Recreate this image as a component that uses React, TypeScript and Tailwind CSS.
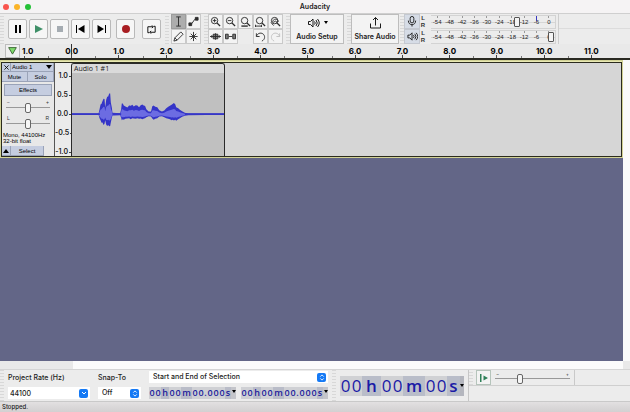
import type { ReactNode } from 'react';
import { clsx } from 'clsx';

const SANS = "font-['Inter','Liberation_Sans',sans-serif]";

const METER_LABELS = ['-54', '-48', '-42', '-36', '-30', '-24', '-18', '-12', '-6', '0'];
const RULER_LABELS = ['0.0', '1.0', '2.0', '3.0', '4.0', '5.0', '6.0', '7.0', '8.0', '9.0', '10.0', '11.0'];
const AMPLITUDES = ['1.0', '0.5', '0.0', '-0.5', '-1.0'];

// x, top, bottom of the waveform envelope
const PEAKS = [
  [36, 173, 177], [116, 173, 177], [119, 160, 187], [122, 146, 193], [125, 144, 201], [128, 136, 200],
  [131, 129, 207], [134, 130, 204], [136, 155, 193], [139, 132, 206], [142, 123, 210], [145, 122, 207],
  [148, 113, 211], [151, 113, 210], [153, 140, 200], [156, 155, 186], [158, 171, 179], [181, 172, 178],
  [184, 160, 186], [186, 143, 193], [189, 143, 190], [192, 149, 192], [197, 152, 189], [203, 155, 188],
  [208, 149, 187], [213, 150, 190], [218, 147, 187], [222, 152, 188], [228, 148, 189], [233, 149, 187],
  [238, 154, 189], [243, 148, 188], [248, 146, 190], [253, 150, 188], [256, 150, 187], [260, 160, 184],
  [267, 167, 181], [274, 167, 182], [278, 151, 188], [282, 149, 192], [287, 153, 189], [293, 154, 187],
  [299, 163, 182], [307, 167, 181], [314, 164, 184], [320, 157, 187], [326, 153, 189], [331, 150, 190],
  [336, 147, 193], [340, 144, 192], [343, 142, 194], [347, 145, 192], [350, 154, 195], [356, 157, 190],
  [361, 162, 187], [368, 166, 183], [376, 171, 180], [386, 173, 178], [494, 173, 177],
];

function envelope(scale: number) {
  const y = (v: number) => 177 + (v - 177) * scale;
  const top = PEAKS.map(([x, t]) => `${x},${y(t)}`);
  const bottom = [...PEAKS].reverse().map(([x, , b]) => `${x},${y(b)}`);
  return [...top, ...bottom].join(' ');
}

function Icon({ children, className = 'size-[11px]' }: { children: ReactNode; className?: string }) {
  return (
    <svg
      viewBox="0 0 24 24"
      className={className}
      fill="none"
      stroke="currentColor"
      strokeWidth="2"
      aria-hidden="true"
    >
      {children}
    </svg>
  );
}

const lens = (
  <>
    <circle cx="10" cy="10" r="7" />
    <path d="M15 15l7 7" strokeWidth="3" />
  </>
);

const speaker = <path d="M2 9h4l5-5v16l-5-5H2zM14 9q3 3 0 6M17 6q5 6 0 12M20 4q7 8 0 16" />;

function Grip() {
  return <div className="w-1 shrink-0 self-stretch bg-[repeating-linear-gradient(0deg,#d8d8d8_0_1px,#ececec_1px_3px)]" />;
}

function TransportButton({ label, children }: { label: string; children: ReactNode }) {
  return (
    <button
      aria-label={label}
      className="flex h-5 w-[19px] items-center justify-center rounded-xs border border-[#b9b9b9] bg-[#f6f6f6] text-black"
    >
      {children}
    </button>
  );
}

function ToolButton({ label, active, dim, children }: { label: string; active?: boolean; dim?: boolean; children: ReactNode }) {
  return (
    <button
      aria-label={label}
      className={clsx(
        'flex size-[15px] items-center justify-center border',
        active ? 'border-[#9c9c9c] bg-[#adadad]' : 'border-[#c9c9c9] bg-[#f3f3f3]',
        dim ? 'text-[#c0c0c0]' : 'text-[#2c2c2c]',
      )}
    >
      {children}
    </button>
  );
}

function Meter({ label, value, peak, children }: { label: string; value: number; peak?: boolean; children: ReactNode }) {
  return (
    <div className="flex h-[15px] items-center">
      <button aria-label={label} className="flex h-[15px] w-4 items-center justify-center border border-[#c4c8d0] bg-[#d6dce6]">
        {children}
      </button>
      <div className="flex w-[6px] flex-col items-center font-['Liberation_Sans',sans-serif] text-[6px] leading-[7px] font-bold text-[#333]">
        <span>L</span>
        <span>R</span>
      </div>
      <div className="relative ml-[5px] flex h-[14px] w-[125px] border-y border-r border-[#d3d3d3]">
        <div className="absolute inset-x-0 top-[6px] h-px bg-[#d6d6d6]" />
        {METER_LABELS.map((l) => (
          <span key={l} className="relative flex flex-1 justify-center font-['Liberation_Sans',sans-serif] text-[6px] leading-[13px] text-[#222]">
            {l}
            <span className={clsx('absolute top-0 w-px', peak && l === '-6' ? 'h-[5px] bg-[#3a3ac0]' : 'h-[2px] bg-[#999]')} />
          </span>
        ))}
        <input
          type="range"
          aria-label={`${label} level`}
          defaultValue={value}
          className="absolute inset-0 w-full appearance-none bg-transparent [&::-webkit-slider-thumb]:h-[10px] [&::-webkit-slider-thumb]:w-[6px] [&::-webkit-slider-thumb]:appearance-none [&::-webkit-slider-thumb]:rounded-[1px] [&::-webkit-slider-thumb]:border [&::-webkit-slider-thumb]:border-[#555] [&::-webkit-slider-thumb]:bg-[#f4f4f4]"
        />
      </div>
    </div>
  );
}

function Slider({ label, value, low, high }: { label: string; value: number; low: string; high: string }) {
  return (
    <div className="relative mx-1 h-4">
      <div className="flex justify-between px-px text-[5px] leading-[5px] text-[#333]">
        <span>{low}</span>
        <span>{high}</span>
      </div>
      <input
        type="range"
        aria-label={label}
        defaultValue={value}
        className="absolute inset-x-0 top-[2px] h-[10px] w-full appearance-none bg-transparent [&::-webkit-slider-runnable-track]:h-px [&::-webkit-slider-runnable-track]:bg-[#999] [&::-webkit-slider-thumb]:-mt-1 [&::-webkit-slider-thumb]:h-[10px] [&::-webkit-slider-thumb]:w-[6px] [&::-webkit-slider-thumb]:appearance-none [&::-webkit-slider-thumb]:rounded-[2px] [&::-webkit-slider-thumb]:border [&::-webkit-slider-thumb]:border-[#666] [&::-webkit-slider-thumb]:bg-[#f6f6f6]"
      />
    </div>
  );
}

function SmallTime({ label }: { label: string }) {
  return (
    <div
      role="group"
      aria-label={label}
      className="flex h-3 items-center bg-[#cfd0d4] text-center font-['Open_Sans',sans-serif] text-[9px] leading-3 font-semibold text-[#1c1c9c]"
    >
      {'00h00m00.000s'.split('').map((c, i) => (
        <span
          key={i}
          className={clsx(
            c === 'h' && 'w-2 bg-[#b9bcc8]',
            c === 'm' && 'w-[11px] bg-[#b9bcc8]',
            c === 's' && 'w-[6px] bg-[#b9bcc8]',
            c === '.' && 'w-[3px]',
            c === '0' && 'w-[6px]',
          )}
        >
          {c}
        </span>
      ))}
      <button aria-label={`${label} format`} className="flex h-3 w-[5px] items-start justify-center bg-[#c4c5ca] pt-[3px]">
        <svg viewBox="0 0 4 3" className="h-[3px] w-1" aria-hidden="true"><path d="M0 0h4L2 3z" /></svg>
      </button>
    </div>
  );
}

function BigTime() {
  return (
    <div
      role="group"
      aria-label="Audio position"
      className="flex h-5 items-center bg-[#d0d1d4] text-center font-['Open_Sans',sans-serif] text-[17px] leading-5 font-medium text-[#1a1aa6]"
    >
      {'00h00m00s'.split('').map((c, i) => (
        <span
          key={i}
          className={clsx(
            c === 'h' && 'w-[19px] bg-[#b9bdc9] font-semibold',
            c === 'm' && 'w-[22px] bg-[#b9bdc9] font-semibold',
            c === 's' && 'w-[13px] bg-[#b9bdc9] font-semibold',
            c === '0' && 'w-[11px]',
          )}
        >
          {c}
        </span>
      ))}
      <button aria-label="Position format" className="flex h-5 w-1 items-center justify-center bg-[#b4b6be]">
        <svg viewBox="0 0 4 3" className="h-[3px] w-1" aria-hidden="true"><path d="M0 0h4L2 3z" /></svg>
      </button>
    </div>
  );
}

function Toolbars() {
  return (
    <div className="flex h-[31px] shrink-0 items-stretch border-t border-[#cfcfcf] bg-[#ececec]">
      <Grip />
      <div className="flex items-center gap-[2px] pr-1 pl-1">
        <TransportButton label="Pause">
          <svg viewBox="0 0 8 8" className="size-2"><path d="M1 0h2v8H1zM5 0h2v8H5z" /></svg>
        </TransportButton>
        <TransportButton label="Play">
          <svg viewBox="0 0 8 8" className="size-2"><path d="M0 0l8 4-8 4z" fill="#3f9068" /></svg>
        </TransportButton>
        <TransportButton label="Stop">
          <svg viewBox="0 0 8 8" className="size-2"><path d="M1 1h6v6H1z" fill="#a5acb2" /></svg>
        </TransportButton>
        <TransportButton label="Skip to start">
          <svg viewBox="0 0 9 8" className="h-2 w-[9px]"><path d="M0 0h1v8H0zM8.500 0v8L2 4z" /></svg>
        </TransportButton>
        <TransportButton label="Skip to end">
          <svg viewBox="0 0 9 8" className="h-2 w-[9px]"><path d="M8 0h1v8H8zM.5 0v8L7 4z" /></svg>
        </TransportButton>
        <div className="ml-[3px] flex gap-[7px]">
          <TransportButton label="Record">
            <svg viewBox="0 0 8 8" className="size-2"><circle cx="4" cy="4" r="4" fill="#a81e22" /></svg>
          </TransportButton>
          <TransportButton label="Loop">
            <Icon className="size-[11px]">
              <path d="M7 19H4V6h11M17 5h3v13H9" />
              <path d="M13 3l3 3-3 3M11 21l-3-3 3-3" />
            </Icon>
          </TransportButton>
        </div>
      </div>
      <Grip />
      <div className="grid shrink-0 grid-cols-2 pr-[3px] pl-[2px]">
        <ToolButton label="Selection tool" active>
          <Icon><path d="M7 2h10M7 22h10M12 2v20" /></Icon>
        </ToolButton>
        <ToolButton label="Envelope tool">
          <Icon>
            <path d="M3 19l5-2 7-10 6-2" />
            <path d="M2 15h6v6H2zM16 3h6v6h-6z" fill="currentColor" />
          </Icon>
        </ToolButton>
        <ToolButton label="Draw tool">
          <Icon><path d="M2 22l2-7L17 2l5 5L9 20zM4 15l5 5" /></Icon>
        </ToolButton>
        <ToolButton label="Multi-tool">
          <Icon><path d="M12 2v20M3 12h18M6 6l12 12M18 6L6 18" /></Icon>
        </ToolButton>
      </div>
      <Grip />
      <div className="grid shrink-0 grid-cols-5 pr-[3px]">
        <ToolButton label="Zoom in"><Icon>{lens}<path d="M10 6v8M6 10h8" /></Icon></ToolButton>
        <ToolButton label="Zoom out"><Icon>{lens}<path d="M6 10h8" /></Icon></ToolButton>
        <ToolButton label="Fit selection"><Icon>{lens}<path d="M3 22h14" strokeWidth="3" /></Icon></ToolButton>
        <ToolButton label="Fit project"><Icon>{lens}<path d="M0 22h15M1 19v5M14 19v5" /></Icon></ToolButton>
        <ToolButton label="Zoom toggle"><Icon>{lens}<path d="M6 13c0-8 12-8 12 0M8 15c1-5 7-5 7 0M2 14l6 7" /></Icon></ToolButton>
        <ToolButton label="Trim audio">
          <Icon>
            <path d="M0 12h24" />
            <path d="M7 7h10v10H7z" fill="currentColor" fillOpacity="0.6" />
            <path d="M4 9v6M12 5v14M20 9v6" />
          </Icon>
        </ToolButton>
        <ToolButton label="Silence audio">
          <Icon>
            <path d="M8 12h8" />
            <path d="M1 7h6v10H1zM17 7h6v10h-6z" fill="currentColor" fillOpacity="0.6" />
          </Icon>
        </ToolButton>
        <span />
        <ToolButton label="Undo">
          <Icon><path d="M3 5v7h7M3 12C5 5 12 3 17 6c6 4 5 13-2 16" /></Icon>
        </ToolButton>
        <ToolButton label="Redo" dim>
          <Icon><path d="M21 5v7h-7M21 12C19 5 12 3 7 6c-6 4-5 13 2 16" /></Icon>
        </ToolButton>
      </div>
      <Grip />
      <button className="flex w-[54px] shrink-0 flex-col items-center justify-center gap-[2px] border border-[#bdbdbd] bg-[#f3f3f3] text-[7px] leading-[11px] font-semibold whitespace-nowrap">
        <span className="flex items-center gap-1">
          <Icon className="h-3 w-[13px]">{speaker}</Icon>
          <svg viewBox="0 0 4 3" className="h-[3px] w-1" aria-hidden="true"><path d="M0 0h4L2 3z" /></svg>
        </span>
        Audio Setup
      </button>
      <div className="ml-[3px] flex"><Grip /></div>
      <button className="flex w-[48px] shrink-0 flex-col items-center justify-center gap-[2px] border border-[#bdbdbd] bg-[#f3f3f3] text-[7px] leading-[11px] font-semibold whitespace-nowrap">
        <Icon className="h-3 w-[13px]"><path d="M2 13v9h20v-9M12 17V1M7 6l5-5 5 5" /></Icon>
        Share Audio
      </button>
      <div className="ml-px flex"><Grip /></div>
      <div className="shrink-0">
        <Meter label="Record meter" value={70} peak>
          <Icon className="h-[11px] w-3"><rect x="8" y="1" width="8" height="14" rx="4" /><path d="M4 10c0 12 16 12 16 0M12 19v4" /></Icon>
        </Meter>
        <Meter label="Playback meter" value={99}>
          <Icon className="size-[11px]">{speaker}</Icon>
        </Meter>
      </div>
      <div className="ml-[2px] flex-1 border-l border-[#cdcdcd]">
        <div className="h-[15px] border-b border-[#dcdcdc]" />
      </div>
    </div>
  );
}

function Timeline() {
  return (
    <div className="flex h-4 shrink-0 border-b-2 border-[#2a2a22] bg-[#e9e9e9] text-[8px] leading-[10px] font-bold text-black">
      <button aria-label="Pinned play head" className="ml-[5px] flex h-[14px] w-[15px] shrink-0 items-center justify-center border border-[#bcbcbc] bg-[#f0f0f0]">
        <svg viewBox="0 0 10 9" className="h-2 w-[9px]"><path d="M.7.7h8.600L5 8z" fill="#7fdc6c" stroke="#345c2c" /></svg>
      </button>
      <div className="flex w-7 shrink-0 flex-col justify-between pl-[2px]">
        <span className="pt-[2px]">1.0</span>
        <span className="ml-[2px] h-[2px] w-px bg-[#555]" />
      </div>
      <div className="mr-[15px] flex min-w-0 flex-1">
        {RULER_LABELS.map((l, i) => (
          <div key={l} className="relative flex flex-1 flex-col items-center pt-[2px]">
            {i === 0 && <span className="absolute inset-y-0 w-px bg-[#333]" />}
            {l}
            <span className="absolute bottom-0 h-[3px] w-px bg-[#444]" />
            <span className="absolute bottom-0 left-0 h-[2px] w-px bg-[#777]" />
          </div>
        ))}
      </div>
    </div>
  );
}

function TrackPanel() {
  const cell = 'border-r border-b border-[#9aa3b8] bg-[#c5cde0]';
  return (
    <div className="flex w-[53px] shrink-0 flex-col border-r border-[#555] bg-[#e8e8e8] font-['Liberation_Sans',sans-serif] text-[6px] leading-[8px] text-black">
      <div className="flex h-[9px] bg-[#c5cde0]">
        <button aria-label="Close track" className={clsx(cell, 'flex w-[9px] items-center justify-center')}>
          <svg viewBox="0 0 6 6" className="size-[5px]" stroke="#000"><path d="M.5.5l5 5M5.500.5l-5 5" /></svg>
        </button>
        <button className={clsx(cell, 'flex flex-1 items-center justify-between px-px')}>
          Audio 1
          <svg viewBox="0 0 6 4" className="h-1 w-[6px]"><path d="M0 0h6L3 4z" /></svg>
        </button>
      </div>
      <div className="flex h-[10px]">
        <button className={clsx(cell, 'flex-1')}>Mute</button>
        <button className={clsx(cell, 'flex-1')}>Solo</button>
      </div>
      <button className="mx-[2px] mt-[2px] h-3 border border-[#9aa3b8] bg-[#c5cde0]">Effects</button>
      <div className="mt-[4px]">
        <Slider label="Gain" value={50} low="−" high="+" />
        <Slider label="Pan" value={50} low="L" high="R" />
      </div>
      <p className="pl-px text-[6px] leading-[6px] whitespace-nowrap">
        Mono, 44100Hz
        <br />
        32-bit float
      </p>
      <div className="mt-auto flex h-[10px]">
        <button aria-label="Collapse track" className={clsx(cell, 'flex w-[9px] items-center justify-center')}>
          <svg viewBox="0 0 6 4" className="h-1 w-[6px]"><path d="M0 4h6L3 0z" /></svg>
        </button>
        <button className={clsx(cell, 'w-[33px]')}>Select</button>
      </div>
    </div>
  );
}

function Track() {
  return (
    <div className="border border-[#d2d296] bg-[#e9e9b4] pt-px">
      <div className="flex h-[95px] border border-[#2b2b1e]">
        <TrackPanel />
        <div className="flex w-4 shrink-0 flex-col justify-between bg-[#ebebeb] pt-[9px] text-right text-[7px] leading-[8px] font-semibold">
          {AMPLITUDES.map((a) => (
            <span key={a} className="flex items-center justify-end gap-px">
              {a}
              <span className="h-px w-[2px] bg-[#444]" />
            </span>
          ))}
        </div>
        <div className="flex min-w-0 flex-1 bg-[#d6d6d6]">
          <div className="flex w-[154px] flex-col rounded-t-[3px] border border-b-0 border-[#2a2a2a] bg-[#c0c0c0]">
            <div className="h-[9px] rounded-t-[2px] bg-[#dadada] pl-[2px] font-['Open_Sans',sans-serif] text-[7px] leading-[9px] font-medium whitespace-nowrap">
              Audio 1 #1
            </div>
            <svg viewBox="36 52 458 248" preserveAspectRatio="none" className="min-h-0 w-full flex-1" aria-label="Waveform">
              <polygon points={envelope(1)} fill="#3434c8" />
              <polygon points={envelope(0.5)} fill="#6c6ce2" />
              <path d="M36 175h84M158 175h26M376 175h118" stroke="#3636c6" strokeWidth="5" />
            </svg>
          </div>
        </div>
      </div>
    </div>
  );
}

function Chevrons() {
  return (
    <span className="pointer-events-none absolute right-[2px] flex size-[9px] items-center justify-center rounded-[2px] bg-[#1479f5]">
      <svg viewBox="0 0 6 8" className="h-[7px] w-[6px]" fill="none" stroke="#fff"><path d="M1 3l2-2 2 2M1 5l2 2 2-2" /></svg>
    </span>
  );
}

function BottomBar() {
  return (
    <div className="flex h-8 shrink-0 border-t border-[#d5d5d5] bg-[#ececec] text-[7px] leading-[10px]">
      <Grip />
      <div className="ml-1 flex w-[82px] shrink-0 flex-col justify-between pt-[3px] pb-[2px]">
        <label htmlFor="rate" className="font-medium">Project Rate (Hz)</label>
        <div className="relative flex items-center">
          <input id="rate" defaultValue="44100" className="h-3 w-full bg-white pl-[2px] text-[7px] font-medium" />
          <button aria-label="Choose rate" className="absolute right-[2px] flex size-[9px] items-center justify-center rounded-[2px] bg-[#1479f5]">
            <svg viewBox="0 0 6 4" className="h-1 w-[6px]" fill="none" stroke="#fff"><path d="M1 1l2 2 2-2" /></svg>
          </button>
        </div>
      </div>
      <div className="ml-2 flex w-[43px] shrink-0 flex-col justify-between pt-[3px] pb-[2px]">
        <label htmlFor="snap" className="font-medium">Snap-To</label>
        <div className="relative flex items-center">
          <select id="snap" className="h-3 w-full appearance-none bg-white pl-1 text-[7px] font-medium">
            <option>Off</option>
          </select>
          <Chevrons />
        </div>
      </div>
      <div className="ml-2 flex w-[179px] shrink-0 flex-col justify-between pt-px pb-[2px]">
        <div className="relative flex items-center">
          <select aria-label="Selection mode" className="h-3 w-full appearance-none bg-white pl-1 text-[7px] font-medium">
            <option>Start and End of Selection</option>
          </select>
          <Chevrons />
        </div>
        <div className="flex justify-between">
          <SmallTime label="Selection start" />
          <SmallTime label="Selection end" />
        </div>
      </div>
      <div className="ml-1 flex"><Grip /></div>
      <div className="ml-1 flex shrink-0 items-center pr-1">
        <BigTime />
      </div>
      <div className="flex-1 border-l border-[#c6c6c6]">
        <div className="flex h-4 items-center border-b border-[#cfcfcf]">
          <Grip />
          <button aria-label="Play at speed" className="ml-[3px] flex size-[15px] shrink-0 items-center justify-center border border-[#b5c4bb] bg-[#f3f3f3]">
            <svg viewBox="0 0 9 8" className="h-2 w-[9px]"><path d="M1 0h1.500v8H1zM4.500 1.500L9 4l-4.500 2.500z" fill="#2f8058" /></svg>
          </button>
          <div className="w-[83px] shrink-0 pt-1">
            <Slider label="Playback speed" value={32} low="−" high="+" />
          </div>
          <div className="h-full border-l border-[#c9c9c9]" />
        </div>
      </div>
    </div>
  );
}

export default function App() {
  return (
    <div className={clsx(SANS, 'flex h-screen flex-col overflow-hidden bg-[#ececec] text-[#1b1b1b]')}>
      <header className="relative flex h-[13px] shrink-0 items-center justify-center bg-[#f5f3f4]">
        <div className="absolute left-[3px] flex gap-[5px]">
          <button aria-label="Close" className="size-[6px] rounded-full bg-[#f9544d]" />
          <button aria-label="Minimize" className="size-[6px] rounded-full bg-[#fbb429]" />
          <button aria-label="Zoom" className="size-[6px] rounded-full bg-[#25c138]" />
        </div>
        <h1 className="text-[7px] leading-[11px] font-semibold">Audacity</h1>
      </header>
      <Toolbars />
      <Timeline />
      <main className="flex min-h-0 flex-1">
        <div className="min-w-0 flex-1 bg-[#636687]">
          <Track />
        </div>
        <div className="w-[7px] shrink-0 bg-[#fafafa]" />
      </main>
      <div className="flex h-2 shrink-0 bg-[#e9e9e9]">
        <div className="ml-[73px] flex-1 bg-[#fbfbfb]" />
        <div className="w-[7px]" />
      </div>
      <BottomBar />
      <footer className="h-[11px] shrink-0 border-t border-[#c9c9c9] bg-linear-to-b from-[#e2e0e1] to-[#d2d0d1] pl-[2px] text-[6px] leading-[10px] font-medium">
        Stopped.
      </footer>
    </div>
  );
}
